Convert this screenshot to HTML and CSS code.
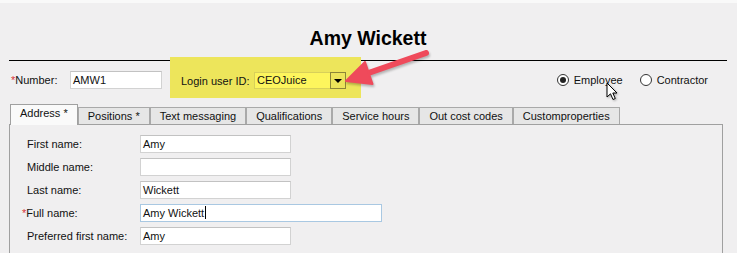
FILE: index.html
```html
<!DOCTYPE html>
<html lang="en">
<head>
    <meta charset="UTF-8">
    <title>Amy Wickett</title>
    <link rel="stylesheet" href="styles.css">
</head>
<body>
    <div class="screen">
        <header class="head">
            <h1>Amy Wickett</h1>
        </header>

        <div class="top-row">
            <label class="num-label"><span class="req">*</span>Number:</label>
            <div class="field num-field">AMW1</div>

            <!-- highlighted login group -->
            <div class="login-group">
                <label class="login-label">Login user ID:</label>
                <div class="field combo">
                    <span class="combo-text">CEOJuice</span>
                    <span class="combo-btn"><span class="tri"></span></span>
                </div>
            </div>

            <div class="radios">
                <span class="radio checked"></span>
                <span class="radio-text">Employee</span>
                <span class="radio"></span>
                <span class="radio-text">Contractor</span>
            </div>
        </div>

        <div class="tabs">
            <div class="tab active">Address *</div>
            <div class="tab">Positions *</div>
            <div class="tab">Text messaging</div>
            <div class="tab">Qualifications</div>
            <div class="tab">Service hours</div>
            <div class="tab">Out cost codes</div>
            <div class="tab">Customproperties</div>
        </div>

        <div class="panel">
            <div class="form-row">
                <label class="form-label">First name:</label>
                <div class="field name-field">Amy</div>
            </div>
            <div class="form-row">
                <label class="form-label">Middle name:</label>
                <div class="field name-field"></div>
            </div>
            <div class="form-row">
                <label class="form-label">Last name:</label>
                <div class="field name-field">Wickett</div>
            </div>
            <div class="form-row">
                <label class="form-label"><span class="req hang">*</span>Full name:</label>
                <div class="field name-field wide focused">Amy Wickett<span class="caret"></span></div>
            </div>
            <div class="form-row">
                <label class="form-label">Preferred first name:</label>
                <div class="field name-field">Amy</div>
            </div>
        </div>

        <!-- annotation arrow -->
        <svg class="arrow" width="100" height="50" viewBox="0 0 100 50">
            <line x1="86" y1="8" x2="27" y2="28.5" stroke="#ef4a5b" stroke-width="6" stroke-linecap="round"/>
            <polygon points="6,36 32.5,39 25,17" fill="#ef4a5b" stroke="#ef4a5b" stroke-width="2" stroke-linejoin="round"/>
        </svg>

        <!-- mouse pointer -->
        <svg class="pointer" width="14" height="20" viewBox="0 0 14 20">
            <path d="M1 1 L1 15 L4.5 11.8 L7 17.5 L9.3 16.5 L6.8 11 L11 11 Z" fill="#fff" stroke="#000" stroke-width="1" stroke-linejoin="round"/>
        </svg>
    </div>
</body>
</html>
```

FILE: styles.css
```css
body {
    margin: 0;
    background-color: #f0eff0;
    font-family: 'Liberation Sans', Arial, sans-serif;
    font-size: 11px;
    color: #111;
}
.screen {
    position: relative;
    width: 737px;
    height: 253px;
    overflow: hidden;
    border-top: 3px solid #f9f9f9;
    box-sizing: border-box;
}
.head {
    margin: 0 10px 0 9px;
    padding: 23px 0 10px;
    border-bottom: 1px solid #000;
}
.head h1 {
    margin: 0;
    text-align: center;
    font-size: 19.5px;
    line-height: 24px;
    font-weight: bold;
    color: #000;
}
.top-row {
    display: flex;
    align-items: center;
    height: 38px;
    margin: 0 10px 0 9px;
}
.req {
    color: #d9343b;
}
.num-label {
    width: 59px;
    padding-left: 2px;
}
.field {
    box-sizing: border-box;
    height: 18px;
    line-height: 16px;
    padding: 0 2px;
    background-color: #fff;
    border: 1px solid #d2d2d2;
    border-top-color: #c2c2c2;
    white-space: nowrap;
}
.num-field {
    width: 92px;
}
.login-group {
    align-self: flex-start;
    display: flex;
    align-items: center;
    margin: -4px 0 0 8px;
    padding: 15px 15px 9px 11px;
    background-color: #ede55b;
}
.login-label {
    width: 73px;
}
.combo {
    display: flex;
    width: 92px;
    height: 17px;
    padding: 0 0 0 2px;
    line-height: 15px;
    background-color: #fdf55d;
    border-color: #d8d05a;
}
.combo-text {
    flex: 1;
}
.combo-btn {
    display: flex;
    align-items: center;
    justify-content: center;
    width: 16px;
    margin: -1px -1px -1px 0;
    box-sizing: border-box;
    border: 1px solid #8c8638;
    background-color: #ece45a;
}
.tri {
    width: 0;
    height: 0;
    border-left: 4px solid transparent;
    border-right: 4px solid transparent;
    border-top: 4px solid #000;
}
.radios {
    display: flex;
    align-items: center;
    margin-left: auto;
    padding-right: 19px;
}
.radio {
    box-sizing: border-box;
    width: 12px;
    height: 12px;
    border: 1px solid #333;
    border-radius: 50%;
    background-color: #fff;
    display: flex;
    align-items: center;
    justify-content: center;
}
.radio.checked::after {
    content: '';
    width: 6px;
    height: 6px;
    border-radius: 50%;
    background-color: #222;
}
.radio-text {
    margin: 0 17px 0 5px;
}
.radio-text:last-child {
    margin-right: 0;
}
.tabs {
    display: flex;
    align-items: flex-end;
    margin: 5px 10px 0 10px;
}
.tab {
    height: 17px;
    line-height: 16px;
    padding: 0 9px;
    box-sizing: border-box;
    background-color: #e6e6e6;
    border: 1px solid #a9a9a9;
    border-bottom: none;
    white-space: nowrap;
}
.tab.active {
    position: relative;
    height: 21px;
    margin-bottom: -1px;
    background-color: #fafafa;
    border-color: #a0a0a0;
}
.panel {
    margin: 0 14px 0 9px;
    height: 200px;
    padding: 10px 0 0 17px;
    border: 1px solid #a0a0a0;
    display: flex;
    flex-direction: column;
    gap: 5px;
}
.form-row {
    display: flex;
    align-items: center;
}
.form-label {
    width: 113px;
}
.hang {
    margin-left: -5px;
}
.name-field {
    width: 151px;
}
.name-field.wide {
    width: 242px;
}
.focused {
    border-color: #a9c8e2;
}
.caret {
    display: inline-block;
    width: 1px;
    height: 13px;
    margin-left: 1px;
    vertical-align: -2px;
    background-color: #000;
}
.arrow {
    position: absolute;
    left: 340px;
    top: 42px;
    filter: drop-shadow(1px 2px 1px rgba(0, 0, 0, 0.25));
}
.pointer {
    position: absolute;
    left: 606px;
    top: 79px;
    filter: drop-shadow(1px 1px 1px rgba(0, 0, 0, 0.3));
}
```
